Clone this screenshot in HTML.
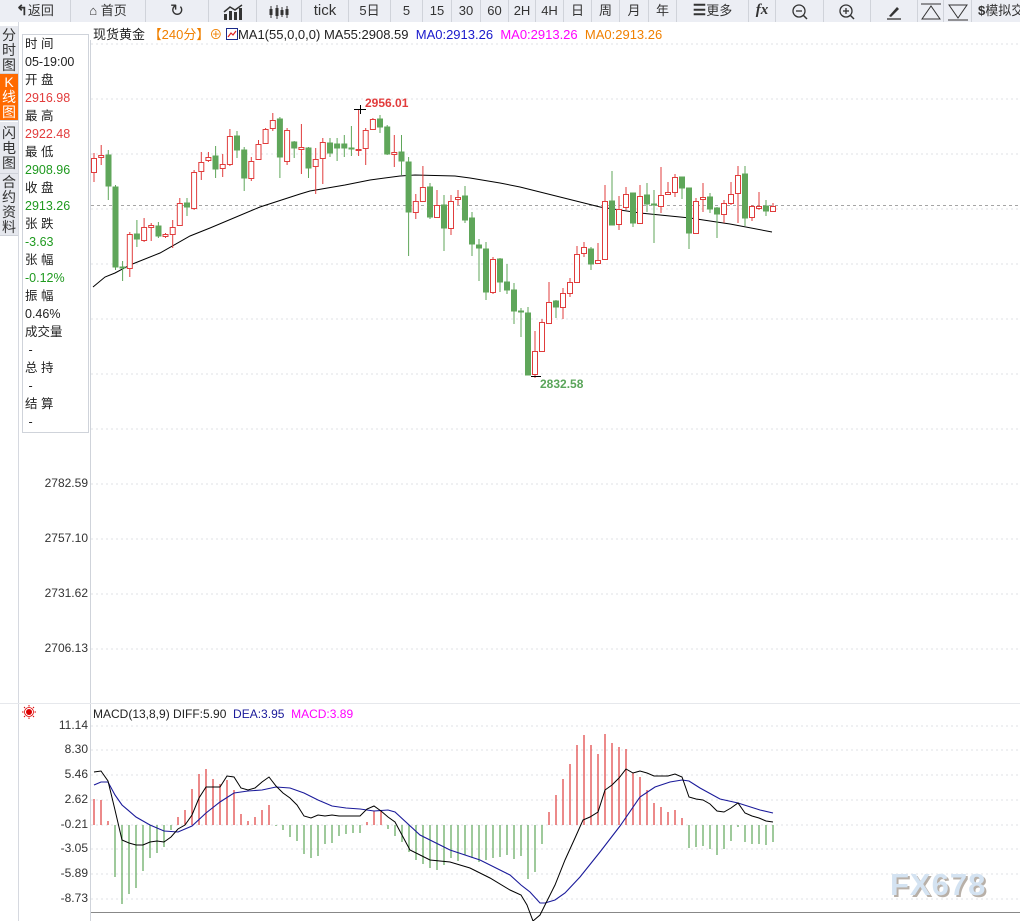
<!DOCTYPE html>
<html><head><meta charset="utf-8"><style>
*{margin:0;padding:0;box-sizing:border-box}
body{width:1020px;height:921px;background:#fff;font-family:"Liberation Sans","Noto Sans CJK SC",sans-serif;overflow:hidden;position:relative;color:#222}
#tb{position:absolute;left:0;top:0;width:1020px;height:22px;background:#eef0f5;border-bottom:1px solid #d4d7de}
.b{position:absolute;top:0;height:22px;line-height:21px;font-size:13px;color:#333;text-align:center;border-right:1px solid #d0d3da;background:#eceef4}
#side{position:absolute;left:0;top:22px;width:19px;height:899px;background:#fff;border-right:1px solid #d6d9e0}
.tab{position:absolute;left:0;width:18px;background:#e6e8ee;font-size:14px;line-height:15px;text-align:center;color:#333;border-bottom:1px solid #cfd2d9}
#info{position:absolute;left:22px;top:34px;width:67px;height:399px;border:1px solid #cfd3da;font-size:12.5px}
#info div{position:absolute;left:2px;height:18px;line-height:18px;white-space:nowrap}
.r{color:#e23c3c}.g{color:#1f9a1f}
.ax{position:absolute;right:932px;font-size:12px;color:#333;text-align:right}
#hdr{position:absolute;left:93px;top:24px;font-size:13px;white-space:nowrap}
</style></head><body>
<div id="tb">
<div class="b" style="left:0;width:71px"><b style="font-size:14px">&#x21B0;</b>返回</div>
<div class="b" style="left:71px;width:75px">&#8962; 首页</div>
<div class="b" style="left:146px;width:63px;font-size:17px">&#x21BB;</div>
<div class="b" style="left:209px;width:48px"><svg width="22" height="16" viewBox="0 0 22 16" style="vertical-align:middle"><rect x="2" y="10" width="3" height="6" fill="#333"/><rect x="7" y="7" width="3" height="9" fill="#333"/><rect x="12" y="8" width="3" height="8" fill="#333"/><rect x="17" y="4" width="3" height="12" fill="#333"/><polyline points="2,8 8,3 13,6 20,1" fill="none" stroke="#333" stroke-width="1.5"/></svg></div>
<div class="b" style="left:257px;width:45px"><svg width="22" height="16" viewBox="0 0 22 16" style="vertical-align:middle"><g stroke="#333" stroke-width="1"><line x1="3" y1="2" x2="3" y2="14"/><line x1="9" y1="1" x2="9" y2="15"/><line x1="14" y1="3" x2="14" y2="13"/><line x1="19" y1="2" x2="19" y2="14"/></g><rect x="1.5" y="5" width="3" height="6" fill="#333"/><rect x="7.5" y="4" width="3" height="8" fill="#333"/><rect x="12.5" y="6" width="3" height="5" fill="#333"/><rect x="17.5" y="5" width="3" height="6" fill="#333"/></svg></div>
<div class="b" style="left:302px;width:47px;font-size:15px">tick</div>
<div class="b" style="left:349px;width:42px">5日</div>
<div class="b" style="left:391px;width:32px">5</div>
<div class="b" style="left:423px;width:29px">15</div>
<div class="b" style="left:452px;width:29px">30</div>
<div class="b" style="left:481px;width:28px">60</div>
<div class="b" style="left:509px;width:27px">2H</div>
<div class="b" style="left:536px;width:28px">4H</div>
<div class="b" style="left:564px;width:28px">日</div>
<div class="b" style="left:592px;width:28px">周</div>
<div class="b" style="left:620px;width:29px">月</div>
<div class="b" style="left:649px;width:28px">年</div>
<div class="b" style="left:677px;width:72px"><b style="font-size:15px">&#9776;</b>更多</div>
<div class="b" style="left:749px;width:27px;font-style:italic;font-weight:bold;font-family:'Liberation Serif',serif;font-size:15px">fx</div>
<div class="b" style="left:776px;width:48px"><svg width="16" height="16" viewBox="0 0 16 16" style="vertical-align:middle"><circle cx="7" cy="7" r="6" fill="none" stroke="#333" stroke-width="1.3"/><line x1="4" y1="7" x2="10" y2="7" stroke="#333" stroke-width="1.3"/><line x1="11" y1="11" x2="15" y2="15" stroke="#333" stroke-width="1.5"/></svg></div>
<div class="b" style="left:824px;width:47px"><svg width="16" height="16" viewBox="0 0 16 16" style="vertical-align:middle"><circle cx="7" cy="7" r="6" fill="none" stroke="#333" stroke-width="1.3"/><line x1="4" y1="7" x2="10" y2="7" stroke="#333" stroke-width="1.3"/><line x1="7" y1="4" x2="7" y2="10" stroke="#333" stroke-width="1.3"/><line x1="11" y1="11" x2="15" y2="15" stroke="#333" stroke-width="1.5"/></svg></div>
<div class="b" style="left:871px;width:47px"><svg width="18" height="16" viewBox="0 0 18 16" style="vertical-align:middle"><path d="M4 12 L12 3 L14 5 L6 13 Z" fill="#333"/><line x1="2" y1="15" x2="16" y2="15" stroke="#333" stroke-width="1.3"/></svg></div>
<div class="b" style="left:918px;width:26px"><svg width="22" height="18" viewBox="0 0 22 18" style="vertical-align:middle"><line x1="1" y1="1" x2="21" y2="1" stroke="#333"/><path d="M2 16 L11 3 L20 16 Z" fill="none" stroke="#333"/></svg></div>
<div class="b" style="left:944px;width:28px"><svg width="22" height="18" viewBox="0 0 22 18" style="vertical-align:middle"><line x1="1" y1="17" x2="21" y2="17" stroke="#333"/><path d="M2 2 L11 15 L20 2 Z" fill="none" stroke="#333"/></svg></div>
<div class="b" style="left:972px;width:60px;text-align:left;padding-left:6px"><b>$</b>模拟交</div>
</div>
<div id="side">
<div class="tab" style="top:4px;height:48px;padding-top:2px">分<br>时<br>图</div>
<div class="tab" style="top:52px;height:47px;padding-top:1px;background:#ff6a00;color:#fff">K<br>线<br>图</div>
<div class="tab" style="top:100px;height:52px;padding-top:4px">闪<br>电<br>图</div>
<div class="tab" style="top:152px;height:62px;padding-top:1px">合<br>约<br>资<br>料</div>
</div>
<div id="info">
<div style="top:0">时 间</div><div style="top:18px">05-19:00</div>
<div style="top:36px">开 盘</div><div class="r" style="top:54px">2916.98</div>
<div style="top:72px">最 高</div><div class="r" style="top:90px">2922.48</div>
<div style="top:108px">最 低</div><div class="g" style="top:126px">2908.96</div>
<div style="top:144px">收 盘</div><div class="g" style="top:162px">2913.26</div>
<div style="top:180px">张 跌</div><div class="g" style="top:198px">-3.63</div>
<div style="top:216px">张 幅</div><div class="g" style="top:234px">-0.12%</div>
<div style="top:252px">振 幅</div><div style="top:270px">0.46%</div>
<div style="top:288px">成交量</div><div style="top:306px">&nbsp;-</div>
<div style="top:324px">总 持</div><div style="top:342px">&nbsp;-</div>
<div style="top:360px">结 算</div><div style="top:378px">&nbsp;-</div>
</div>
<div id="hdr">现货黄金 <span style="color:#f08000">【240分】⊕</span> <svg width="12" height="12" viewBox="0 0 12 12" style="vertical-align:-1px"><rect x="0.5" y="0.5" width="11" height="11" fill="#fff" stroke="#1a2a8a"/><polyline points="2,9 5,5 7,7 10,3" fill="none" stroke="#d22" stroke-width="1.2"/></svg>MA1(55,0,0,0) MA55:2908.59 &nbsp;<span style="color:#1a1acc">MA0:2913.26</span> &nbsp;<span style="color:#f0f">MA0:2913.26</span> &nbsp;<span style="color:#f08000">MA0:2913.26</span></div>
<div class="ax" style="top:476px">2782.59</div>
<div class="ax" style="top:531px">2757.10</div>
<div class="ax" style="top:586px">2731.62</div>
<div class="ax" style="top:641px">2706.13</div>
<div class="ax" style="top:718px">11.14</div>
<div class="ax" style="top:742px">8.30</div>
<div class="ax" style="top:767px">5.46</div>
<div class="ax" style="top:792px">2.62</div>
<div class="ax" style="top:817px">-0.21</div>
<div class="ax" style="top:841px">-3.05</div>
<div class="ax" style="top:866px">-5.89</div>
<div class="ax" style="top:891px">-8.73</div>
<div style="position:absolute;left:93px;top:707px;font-size:12px;white-space:nowrap">MACD(13,8,9) DIFF:5.90 &nbsp;<span style="color:#1a1a9a">DEA:3.95</span> &nbsp;<span style="color:#f0f">MACD:3.89</span></div>
<svg style="position:absolute;left:22px;top:705px" width="14" height="14" viewBox="0 0 14 14"><circle cx="7" cy="7" r="3" fill="#d00"/><circle cx="7" cy="7" r="4.5" fill="none" stroke="#d00" stroke-width="0.8"/><g stroke="#d00" stroke-width="1"><line x1="7" y1="0" x2="7" y2="1.5"/><line x1="7" y1="12.5" x2="7" y2="14"/><line x1="0" y1="7" x2="1.5" y2="7"/><line x1="12.5" y1="7" x2="14" y2="7"/><line x1="2" y1="2" x2="3" y2="3"/><line x1="11" y1="11" x2="12" y2="12"/><line x1="2" y1="12" x2="3" y2="11"/><line x1="11" y1="3" x2="12" y2="2"/></g></svg>
<svg style="position:absolute;left:0;top:0" width="1020" height="921">
<line x1="90.5" y1="40" x2="90.5" y2="921" stroke="#cfd3da"/>
<g stroke="#dfe2e6" stroke-dasharray="2,3">
<line x1="91" y1="44" x2="1020" y2="44"/><line x1="91" y1="99" x2="1020" y2="99"/><line x1="91" y1="154" x2="1020" y2="154"/><line x1="91" y1="209" x2="1020" y2="209"/><line x1="91" y1="264" x2="1020" y2="264"/><line x1="91" y1="319" x2="1020" y2="319"/><line x1="91" y1="374" x2="1020" y2="374"/><line x1="91" y1="429" x2="1020" y2="429"/><line x1="91" y1="484" x2="1020" y2="484"/><line x1="91" y1="539" x2="1020" y2="539"/><line x1="91" y1="594" x2="1020" y2="594"/><line x1="91" y1="649" x2="1020" y2="649"/>
<line x1="91" y1="726" x2="1020" y2="726"/><line x1="91" y1="750" x2="1020" y2="750"/><line x1="91" y1="775" x2="1020" y2="775"/><line x1="91" y1="800" x2="1020" y2="800"/><line x1="91" y1="825" x2="1020" y2="825"/><line x1="91" y1="849" x2="1020" y2="849"/><line x1="91" y1="874" x2="1020" y2="874"/><line x1="91" y1="899" x2="1020" y2="899"/>
</g>
<line x1="0" y1="703.5" x2="1020" y2="703.5" stroke="#e6e8ec"/>
<line x1="91" y1="912.5" x2="1020" y2="912.5" stroke="#888"/>
<line x1="91" y1="205.5" x2="1020" y2="205.5" stroke="#888" stroke-dasharray="3,3" stroke-width="0.8"/>
<polyline fill="none" stroke="#000" stroke-width="1" points="93,287 105,277 115,273 130,265 160,253 190,236 210,228 260,207 300,194 310,191 345,185 370,180 400,176 415,175 455,176 470,178 500,183 520,187 560,197 600,207 640,213 690,218 730,224 772,232"/>
<g stroke-width="1">
<g stroke="#e03c3c" fill="#fff">
<line x1="94" y1="153" x2="94" y2="182"/><rect x="91.5" y="158.5" width="5" height="14"/>
<line x1="101.2" y1="145" x2="101.2" y2="165"/><rect x="98.7" y="155.5" width="5" height="2"/>
<line x1="129.8" y1="232" x2="129.8" y2="277"/><rect x="127.3" y="234.5" width="5" height="34"/>
<line x1="144.1" y1="218" x2="144.1" y2="242"/><rect x="141.6" y="227.5" width="5" height="13"/>
<line x1="151.2" y1="223" x2="151.2" y2="241"/><rect x="148.7" y="225.5" width="5" height="2"/>
<line x1="165.5" y1="233" x2="165.5" y2="238"/><rect x="163" y="234.5" width="5" height="2"/>
<line x1="172.7" y1="220" x2="172.7" y2="248"/><rect x="170.2" y="227.5" width="5" height="7"/>
<line x1="179.8" y1="198" x2="179.8" y2="225"/><rect x="177.3" y="203.5" width="5" height="22"/>
<line x1="194.1" y1="170" x2="194.1" y2="210"/><rect x="191.6" y="172.5" width="5" height="36"/>
<line x1="201.3" y1="152" x2="201.3" y2="180"/><rect x="198.8" y="162.5" width="5" height="9"/>
<line x1="208.4" y1="152" x2="208.4" y2="162"/><rect x="205.9" y="157.5" width="5" height="3"/>
<line x1="222.7" y1="154" x2="222.7" y2="177"/><rect x="220.2" y="164.5" width="5" height="4"/>
<line x1="229.9" y1="129" x2="229.9" y2="166"/><rect x="227.4" y="136.5" width="5" height="28"/>
<line x1="251.3" y1="157" x2="251.3" y2="181"/><rect x="248.8" y="161.5" width="5" height="17"/>
<line x1="258.5" y1="140" x2="258.5" y2="160"/><rect x="256" y="144.5" width="5" height="15"/>
<line x1="265.6" y1="128" x2="265.6" y2="144"/><rect x="263.1" y="129.5" width="5" height="14"/>
<line x1="272.8" y1="113" x2="272.8" y2="131"/><rect x="270.3" y="120.5" width="5" height="8"/>
<line x1="287.1" y1="128" x2="287.1" y2="165"/><rect x="284.6" y="130.5" width="5" height="31"/>
<line x1="301.4" y1="124" x2="301.4" y2="174"/><rect x="298.9" y="147.5" width="5" height="2"/>
<line x1="315.7" y1="148" x2="315.7" y2="194"/><rect x="313.2" y="159.5" width="5" height="7"/>
<line x1="322.8" y1="138" x2="322.8" y2="184"/><rect x="320.3" y="142.5" width="5" height="16"/>
<line x1="358.6" y1="110" x2="358.6" y2="156"/><rect x="356.1" y="149.5" width="5" height="1"/>
<line x1="365.7" y1="128" x2="365.7" y2="165"/><rect x="363.2" y="130.5" width="5" height="18"/>
<line x1="372.9" y1="118" x2="372.9" y2="130"/><rect x="370.4" y="119.5" width="5" height="10"/>
<line x1="394.3" y1="135" x2="394.3" y2="167"/><rect x="391.8" y="152.5" width="5" height="2"/>
<line x1="415.8" y1="194" x2="415.8" y2="219"/><rect x="413.3" y="201.5" width="5" height="11"/>
<line x1="422.9" y1="166" x2="422.9" y2="202"/><rect x="420.4" y="187.5" width="5" height="14"/>
<line x1="437" y1="190" x2="437" y2="218"/><rect x="434.5" y="205.5" width="5" height="12"/>
<line x1="451" y1="195" x2="451" y2="235"/><rect x="448.5" y="201.5" width="5" height="27"/>
<line x1="458" y1="190" x2="458" y2="205"/><rect x="455.5" y="197.5" width="5" height="2"/>
<line x1="493" y1="257" x2="493" y2="294"/><rect x="490.5" y="259.5" width="5" height="33"/>
<line x1="535" y1="331" x2="535" y2="378"/><rect x="532.5" y="351.5" width="5" height="23"/>
<line x1="542" y1="319" x2="542" y2="352"/><rect x="539.5" y="322.5" width="5" height="29"/>
<line x1="549" y1="282" x2="549" y2="323"/><rect x="546.5" y="302.5" width="5" height="21"/>
<line x1="563" y1="288" x2="563" y2="319"/><rect x="560.5" y="293.5" width="5" height="14"/>
<line x1="570" y1="278" x2="570" y2="297"/><rect x="567.5" y="282.5" width="5" height="11"/>
<line x1="577" y1="246" x2="577" y2="282"/><rect x="574.5" y="254.5" width="5" height="28"/>
<line x1="584" y1="242" x2="584" y2="257"/><rect x="581.5" y="247.5" width="5" height="6"/>
<line x1="598" y1="243" x2="598" y2="264"/><rect x="595.5" y="260.5" width="5" height="3"/>
<line x1="605" y1="185" x2="605" y2="259"/><rect x="602.5" y="201.5" width="5" height="58"/>
<line x1="619" y1="196" x2="619" y2="230"/><rect x="616.5" y="209.5" width="5" height="15"/>
<line x1="626" y1="187" x2="626" y2="210"/><rect x="623.5" y="194.5" width="5" height="13"/>
<line x1="640" y1="185" x2="640" y2="223"/><rect x="637.5" y="196.5" width="5" height="27"/>
<line x1="661" y1="167" x2="661" y2="213"/><rect x="658.5" y="195.5" width="5" height="11"/>
<line x1="668" y1="182" x2="668" y2="195"/><rect x="665.5" y="192.5" width="5" height="2"/>
<line x1="675" y1="174" x2="675" y2="197"/><rect x="672.5" y="177.5" width="5" height="15"/>
<line x1="696" y1="198" x2="696" y2="233"/><rect x="693.5" y="201.5" width="5" height="32"/>
<line x1="703" y1="183" x2="703" y2="212"/><rect x="700.5" y="197.5" width="5" height="2"/>
<line x1="724" y1="200" x2="724" y2="223"/><rect x="721.5" y="203.5" width="5" height="11"/>
<line x1="731" y1="182" x2="731" y2="205"/><rect x="728.5" y="194.5" width="5" height="9"/>
<line x1="738" y1="166" x2="738" y2="223"/><rect x="735.5" y="175.5" width="5" height="18"/>
<line x1="752" y1="205" x2="752" y2="221"/><rect x="749.5" y="206.5" width="5" height="11"/>
<line x1="759" y1="192" x2="759" y2="210"/><rect x="756.5" y="206.5" width="5" height="2"/>
<line x1="773" y1="203" x2="773" y2="212"/><rect x="770.5" y="206.5" width="5" height="5"/>
</g>
<g stroke="#5fa65a" fill="#5fa65a">
<line x1="108.3" y1="150" x2="108.3" y2="200"/><rect x="106" y="155" width="5" height="31"/>
<line x1="115.5" y1="185" x2="115.5" y2="270"/><rect x="113" y="187" width="5" height="80"/>
<line x1="122.6" y1="261" x2="122.6" y2="281"/><rect x="120" y="267" width="5" height="1"/>
<line x1="136.9" y1="220" x2="136.9" y2="247"/><rect x="134.4" y="234" width="5" height="5"/>
<line x1="158.4" y1="222" x2="158.4" y2="238"/><rect x="156" y="226" width="5" height="10"/>
<line x1="187" y1="198" x2="187" y2="216"/><rect x="184.5" y="203" width="5" height="4"/>
<line x1="215.6" y1="146" x2="215.6" y2="178"/><rect x="213" y="156" width="5" height="13"/>
<line x1="237" y1="131" x2="237" y2="158"/><rect x="234.5" y="136" width="5" height="14"/>
<line x1="244.2" y1="147" x2="244.2" y2="191"/><rect x="241.7" y="150" width="5" height="28"/>
<line x1="279.9" y1="117" x2="279.9" y2="178"/><rect x="277.4" y="119" width="5" height="38"/>
<line x1="294.2" y1="141" x2="294.2" y2="158"/><rect x="291.7" y="142" width="5" height="6"/>
<line x1="308.5" y1="147" x2="308.5" y2="178"/><rect x="306" y="148" width="5" height="20"/>
<line x1="330" y1="138" x2="330" y2="157"/><rect x="327.5" y="143" width="5" height="10"/>
<line x1="337.1" y1="138" x2="337.1" y2="161"/><rect x="334.6" y="144" width="5" height="4"/>
<line x1="344.3" y1="135" x2="344.3" y2="157"/><rect x="341.8" y="144" width="5" height="4"/>
<line x1="351.4" y1="126" x2="351.4" y2="156"/><rect x="349" y="148" width="5" height="1"/>
<line x1="380" y1="115" x2="380" y2="133"/><rect x="377.5" y="119" width="5" height="8"/>
<line x1="387.2" y1="125" x2="387.2" y2="155"/><rect x="384.7" y="127" width="5" height="27"/>
<line x1="401.5" y1="135" x2="401.5" y2="175"/><rect x="399" y="152" width="5" height="9"/>
<line x1="408.6" y1="157" x2="408.6" y2="256"/><rect x="406.1" y="162" width="5" height="50"/>
<line x1="430" y1="183" x2="430" y2="219"/><rect x="427.5" y="187" width="5" height="30"/>
<line x1="444" y1="195" x2="444" y2="251"/><rect x="441.5" y="205" width="5" height="23"/>
<line x1="465" y1="186" x2="465" y2="223"/><rect x="462.5" y="196" width="5" height="24"/>
<line x1="472" y1="212" x2="472" y2="256"/><rect x="469.5" y="218" width="5" height="26"/>
<line x1="479" y1="239" x2="479" y2="281"/><rect x="476.5" y="245" width="5" height="3"/>
<line x1="486" y1="242" x2="486" y2="300"/><rect x="483.5" y="249" width="5" height="43"/>
<line x1="500" y1="258" x2="500" y2="292"/><rect x="497.5" y="259" width="5" height="23"/>
<line x1="507" y1="264" x2="507" y2="294"/><rect x="504.5" y="282" width="5" height="8"/>
<line x1="514" y1="283" x2="514" y2="324"/><rect x="511.5" y="290" width="5" height="21"/>
<line x1="521" y1="308" x2="521" y2="337"/><rect x="518.5" y="311" width="5" height="1"/>
<line x1="528" y1="307" x2="528" y2="375"/><rect x="525.5" y="313" width="5" height="62"/>
<line x1="556" y1="300" x2="556" y2="318"/><rect x="553.5" y="301" width="5" height="6"/>
<line x1="591" y1="247" x2="591" y2="270"/><rect x="588.5" y="249" width="5" height="15"/>
<line x1="612" y1="171" x2="612" y2="225"/><rect x="609.5" y="201" width="5" height="24"/>
<line x1="633" y1="193" x2="633" y2="227"/><rect x="630.5" y="193" width="5" height="30"/>
<line x1="647" y1="183" x2="647" y2="212"/><rect x="644.5" y="195" width="5" height="9"/>
<line x1="654" y1="190" x2="654" y2="243"/><rect x="651.5" y="204" width="5" height="1"/>
<line x1="682" y1="177" x2="682" y2="199"/><rect x="679.5" y="177" width="5" height="11"/>
<line x1="689" y1="188" x2="689" y2="249"/><rect x="686.5" y="188" width="5" height="45"/>
<line x1="710" y1="193" x2="710" y2="213"/><rect x="707.5" y="197" width="5" height="12"/>
<line x1="717" y1="207" x2="717" y2="238"/><rect x="714.5" y="208" width="5" height="6"/>
<line x1="745" y1="166" x2="745" y2="226"/><rect x="742.5" y="174" width="5" height="44"/>
<line x1="766" y1="200" x2="766" y2="216"/><rect x="763.5" y="206" width="5" height="5"/>
</g>
</g>
<g stroke="#000" stroke-width="1"><line x1="354" y1="109.5" x2="366" y2="109.5"/><line x1="360.5" y1="105" x2="360.5" y2="114"/><line x1="531" y1="376.5" x2="541" y2="376.5"/></g>
<text x="365" y="107" font-size="12" font-weight="bold" fill="#e23c3c" font-family="Liberation Sans">2956.01</text>
<text x="540" y="388" font-size="12" font-weight="bold" fill="#5aa55a" font-family="Liberation Sans">2832.58</text>
<g stroke="#e03c3c" stroke-width="1.2">
<line x1="94" y1="825" x2="94" y2="799"/><line x1="101" y1="825" x2="101" y2="800"/><line x1="108" y1="825" x2="108" y2="821"/><line x1="178" y1="825" x2="178" y2="817"/><line x1="185" y1="825" x2="185" y2="810"/><line x1="192" y1="825" x2="192" y2="789"/><line x1="199" y1="825" x2="199" y2="774"/><line x1="206" y1="825" x2="206" y2="769"/><line x1="213" y1="825" x2="213" y2="779"/><line x1="220" y1="825" x2="220" y2="784"/><line x1="227" y1="825" x2="227" y2="780"/><line x1="234" y1="825" x2="234" y2="790"/><line x1="241" y1="825" x2="241" y2="814"/><line x1="248" y1="825" x2="248" y2="821"/><line x1="255" y1="825" x2="255" y2="817"/><line x1="262" y1="825" x2="262" y2="810"/><line x1="269" y1="825" x2="269" y2="805"/><line x1="367" y1="825" x2="367" y2="822"/><line x1="374" y1="825" x2="374" y2="811"/><line x1="381" y1="825" x2="381" y2="810"/>
<line x1="549" y1="825" x2="549" y2="812"/><line x1="556" y1="825" x2="556" y2="795"/><line x1="563" y1="825" x2="563" y2="779"/><line x1="570" y1="825" x2="570" y2="764"/><line x1="577" y1="825" x2="577" y2="745"/><line x1="584" y1="825" x2="584" y2="735"/><line x1="591" y1="825" x2="591" y2="745"/><line x1="598" y1="825" x2="598" y2="754"/><line x1="605" y1="825" x2="605" y2="734"/><line x1="612" y1="825" x2="612" y2="743"/><line x1="619" y1="825" x2="619" y2="747"/><line x1="626" y1="825" x2="626" y2="749"/><line x1="633" y1="825" x2="633" y2="773"/><line x1="640" y1="825" x2="640" y2="777"/><line x1="647" y1="825" x2="647" y2="790"/><line x1="654" y1="825" x2="654" y2="803"/><line x1="661" y1="825" x2="661" y2="807"/><line x1="668" y1="825" x2="668" y2="812"/><line x1="675" y1="825" x2="675" y2="810"/><line x1="682" y1="825" x2="682" y2="818"/>
</g>
<g stroke="#5fa65a" stroke-width="1.2">
<line x1="115" y1="825" x2="115" y2="877"/><line x1="122" y1="825" x2="122" y2="904"/><line x1="129" y1="825" x2="129" y2="894"/><line x1="136" y1="825" x2="136" y2="888"/><line x1="143" y1="825" x2="143" y2="871"/><line x1="150" y1="825" x2="150" y2="858"/><line x1="157" y1="825" x2="157" y2="853"/><line x1="164" y1="825" x2="164" y2="847"/><line x1="171" y1="825" x2="171" y2="830"/><line x1="276" y1="825" x2="276" y2="826"/><line x1="283" y1="825" x2="283" y2="830"/><line x1="290" y1="825" x2="290" y2="837"/><line x1="297" y1="825" x2="297" y2="841"/><line x1="304" y1="825" x2="304" y2="854"/><line x1="311" y1="825" x2="311" y2="858"/><line x1="318" y1="825" x2="318" y2="856"/><line x1="325" y1="825" x2="325" y2="844"/><line x1="332" y1="825" x2="332" y2="843"/><line x1="339" y1="825" x2="339" y2="836"/><line x1="346" y1="825" x2="346" y2="834"/><line x1="353" y1="825" x2="353" y2="833"/><line x1="360" y1="825" x2="360" y2="833"/><line x1="388" y1="825" x2="388" y2="829"/><line x1="395" y1="825" x2="395" y2="836"/>
<line x1="402" y1="825" x2="402" y2="842"/><line x1="409" y1="825" x2="409" y2="852"/><line x1="416" y1="825" x2="416" y2="860"/><line x1="423" y1="825" x2="423" y2="864"/><line x1="430" y1="825" x2="430" y2="868"/><line x1="437" y1="825" x2="437" y2="870"/><line x1="444" y1="825" x2="444" y2="865"/><line x1="451" y1="825" x2="451" y2="858"/><line x1="458" y1="825" x2="458" y2="861"/><line x1="465" y1="825" x2="465" y2="855"/><line x1="472" y1="825" x2="472" y2="858"/><line x1="479" y1="825" x2="479" y2="862"/><line x1="486" y1="825" x2="486" y2="860"/><line x1="493" y1="825" x2="493" y2="858"/><line x1="500" y1="825" x2="500" y2="857"/><line x1="507" y1="825" x2="507" y2="855"/><line x1="514" y1="825" x2="514" y2="859"/><line x1="521" y1="825" x2="521" y2="856"/><line x1="528" y1="825" x2="528" y2="879"/><line x1="535" y1="825" x2="535" y2="872"/><line x1="542" y1="825" x2="542" y2="844"/>
<line x1="689" y1="825" x2="689" y2="848"/><line x1="696" y1="825" x2="696" y2="847"/><line x1="703" y1="825" x2="703" y2="846"/><line x1="710" y1="825" x2="710" y2="849"/><line x1="717" y1="825" x2="717" y2="855"/><line x1="724" y1="825" x2="724" y2="849"/><line x1="731" y1="825" x2="731" y2="841"/><line x1="738" y1="825" x2="738" y2="827"/><line x1="745" y1="825" x2="745" y2="842"/><line x1="752" y1="825" x2="752" y2="844"/><line x1="759" y1="825" x2="759" y2="844"/><line x1="766" y1="825" x2="766" y2="845"/><line x1="773" y1="825" x2="773" y2="842"/>
</g>
<polyline fill="none" stroke="#1a1a9a" stroke-width="1.1" points="94,785 101,782 108,782 115,795 122,805 136,817 150,825 164,831 178,832 192,826 206,813 220,802 234,793 248,791 262,790 276,787 290,788 304,793 318,800 332,806 346,808 360,809 374,811 388,810 395,812 420,835 450,850 480,860 510,875 521,885 530,892 540,903 545,903 555,900 565,893 580,877 600,852 620,826 640,797 655,787 670,782 682,780 689,781 700,788 720,799 738,803 760,810 773,813"/>
<polyline fill="none" stroke="#000" stroke-width="1" points="94,772 101,771 108,781 115,810 122,840 129,843 136,845 143,845 150,842 157,841 164,842 171,837 178,829 185,825 192,815 199,798 206,787 213,787 220,787 227,776 234,777 241,788 248,790 255,788 262,782 269,777 276,786 283,793 290,798 297,805 304,816 311,818 318,815 325,816 332,815 339,816 346,816 353,816 360,816 367,809 374,806 381,811 388,817 395,822 410,850 430,860 450,862 470,868 490,878 510,890 521,895 527,905 533,921 540,915 545,905 555,885 565,860 575,838 583,820 590,817 598,812 605,790 612,785 619,778 626,769 633,773 640,771 647,773 654,776 661,776 668,776 675,774 682,777 689,797 696,799 703,800 710,804 717,811 724,812 731,808 738,803 745,813 752,816 759,818 766,821 773,822"/>
<text x="892" y="897" font-size="31" font-weight="bold" fill="#b8b0a8" font-family="Liberation Sans" letter-spacing="1">FX678</text>
<text x="890" y="895" font-size="31" font-weight="bold" fill="#d4e3f2" font-family="Liberation Sans" letter-spacing="1">FX678</text>
</svg>
</body></html>
